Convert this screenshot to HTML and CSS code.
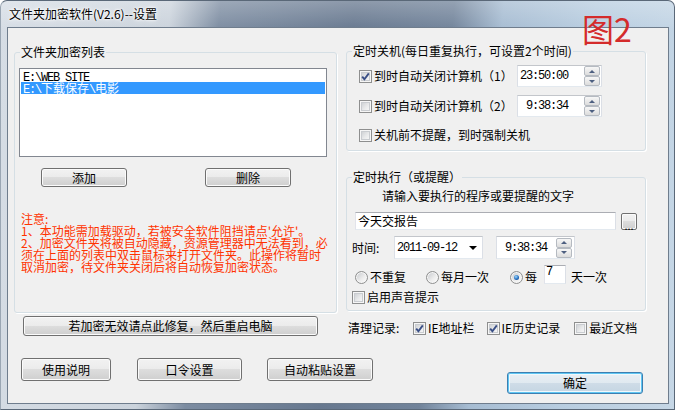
FILE: index.html
```html
<!DOCTYPE html>
<html>
<head>
  <meta charset="utf-8">
  <title>文件夹加密软件(V2.6)--设置</title>
  <link rel="stylesheet" href="styles.css">
</head>
<body>
<div class="window">
  <div class="titlebar">文件夹加密软件(V2.6)--设置</div>
  <div class="tag">图2</div>
  <div class="client">
    <div class="main">
      <fieldset class="group files">
        <legend>文件夹加密列表</legend>
        <div class="listbox">
          <div class="item"><span class="m">E:\WEB SITE</span></div>
          <div class="item sel"><span class="m">E:\</span>下载保存<span class="m">\</span>电影</div>
        </div>
        <div class="list-btns">
          <button class="btn add">添加</button>
          <button class="btn del">删除</button>
        </div>
        <p class="notice">注意:<br>1、本功能需加载驱动，若被安全软件阻挡请点'允许'。<br>2、加密文件夹将被自动隐藏，资源管理器中无法看到，必<br>须在上面的列表中双击鼠标来打开文件夹。此操作将暂时<br>取消加密，待文件夹关闭后将自动恢复加密状态。</p>
      </fieldset>

      <div class="right">
        <fieldset class="group shutdown">
          <legend>定时关机(每日重复执行，可设置2个时间)</legend>
          <div class="row r1">
            <span class="cb on"><svg width="9" height="9" viewBox="0 0 9 9"><path d="M1.2 4.6 L3.4 7.2 L7.8 1.4" fill="none" stroke="#3a4f86" stroke-width="1.9"/></svg></span>
            <span class="lbl">到时自动关闭计算机（1）</span>
            <div class="timebox"><span class="val m">23:50:00</span><span class="spin"><i class="up"></i><i class="down"></i></span></div>
          </div>
          <div class="row r2">
            <span class="cb"></span>
            <span class="lbl">到时自动关闭计算机（2）</span>
            <div class="timebox"><span class="val m">&nbsp;9:38:34</span><span class="spin"><i class="up"></i><i class="down"></i></span></div>
          </div>
          <div class="row r3">
            <span class="cb"></span>
            <span class="lbl">关机前不提醒，到时强制关机</span>
          </div>
        </fieldset>

        <fieldset class="group timer">
          <legend>定时执行（或提醒）</legend>
          <div class="prompt">请输入要执行的程序或要提醒的文字</div>
          <div class="textrow">
            <div class="textbox">今天交报告</div>
            <button class="btn dots">...</button>
          </div>
          <div class="daterow">
            <span class="dlabel">时间:</span>
            <div class="datebox"><span class="m">2011-09-12</span><span class="drop"></span></div>
            <div class="timebox small"><span class="val m">&nbsp;9:38:34</span><span class="spin"><i class="up"></i><i class="down"></i></span></div>
          </div>
          <div class="radiorow">
            <span class="rb"></span><span class="lbl">不重复</span>
            <span class="rb r-month"></span><span class="lbl">每月一次</span>
            <span class="rb on r-every"></span><span class="lbl">每</span>
            <div class="numbox m">7</div>
            <span class="lbl days">天一次</span>
          </div>
          <div class="row sound">
            <span class="cb"></span>
            <span class="lbl">启用声音提示</span>
          </div>
        </fieldset>
      </div>
    </div>

    <div class="mid">
      <button class="btn repair">若加密无效请点此修复，然后重启电脑</button>
      <div class="clean">
        <span class="clabel">清理记录:</span>
        <span class="cb on"><svg width="9" height="9" viewBox="0 0 9 9"><path d="M1.2 4.6 L3.4 7.2 L7.8 1.4" fill="none" stroke="#3a4f86" stroke-width="1.9"/></svg></span>
        <span class="lbl">IE地址栏</span>
        <span class="cb on c2"><svg width="9" height="9" viewBox="0 0 9 9"><path d="M1.2 4.6 L3.4 7.2 L7.8 1.4" fill="none" stroke="#3a4f86" stroke-width="1.9"/></svg></span>
        <span class="lbl">IE历史记录</span>
        <span class="cb c3"></span>
        <span class="lbl">最近文档</span>
      </div>
    </div>

    <div class="bottom">
      <button class="btn help">使用说明</button>
      <button class="btn pass">口令设置</button>
      <button class="btn paste">自动粘贴设置</button>
      <button class="btn ok">确定</button>
    </div>
  </div>
</div>
</body>
</html>
```

FILE: styles.css
```css
* {
  box-sizing: border-box;
}

body {
  margin: 0;
  background: #fff;
  font-family: "Noto Sans CJK SC", "Liberation Sans", sans-serif;
  font-size: 12px;
  color: #000;
}

.m {
  font-family: "Liberation Mono", "Noto Sans CJK SC", monospace;
  letter-spacing: -1.2px;
}

/* window frame */
.window {
  position: relative;
  width: 675px;
  height: 410px;
  border: 1px solid #5a6878;
  border-left-color: #9aa6b3;
  border-radius: 7px 7px 0 0;
  padding: 0 5px 5px 6px;
  background:
    linear-gradient(180deg, rgba(255,255,255,0.25), rgba(255,255,255,0) 30px),
    linear-gradient(95deg, #d6dde5 0%, #cbd3dc 24%, #7c8ca1 31%, #67788f 50%, #71839a 64%, #a6bcd2 71%, #b8cde0 84%, #c6d7e6 100%);
}

.titlebar {
  height: 26px;
  line-height: 26px;
  padding-left: 2px;
  font-size: 12px;
  text-shadow: 0 0 6px #fff, 0 0 3px #fff, 0 0 2px #fff;
}

.tag {
  position: absolute;
  left: 581px;
  top: 9px;
  font-size: 32px;
  line-height: 36px;
  color: #d42b2b;
  z-index: 2;
}

.client {
  width: 662px;
  height: 377px;
  border: 1px solid #6f7d8d;
  background: #f0f0f0;
  display: flex;
  flex-direction: column;
}

/* group boxes */
.group {
  margin: 0;
  padding: 0;
  border: 1px solid #d5dfe5;
  border-radius: 3px;
  box-shadow: 1px 1px 0 #fff;
  min-width: 0;
}

.group legend {
  margin-left: 5px;
  padding: 0 1px;
  line-height: 16px;
}

.main {
  display: flex;
  align-items: flex-start;
  margin: 16px 0 0 6px;
}

.files {
  width: 323px;
  height: 269px;
}

.listbox {
  width: 308px;
  height: 89px;
  margin: 8px 0 0 4px;
  padding: 1px;
  border: 1px solid #828790;
  background: #fff;
}

.item {
  height: 12px;
  line-height: 12px;
  padding-left: 2px;
  white-space: nowrap;
}

.item.sel {
  background: #3399ff;
  color: #fff;
}

.list-btns {
  display: flex;
  margin: 11px 0 0 26px;
  gap: 78px;
}

.btn {
  font: inherit;
  color: #000;
  padding: 0;
  border: 1px solid #707070;
  border-radius: 3px;
  background: linear-gradient(#f2f2f2 0%, #ebebeb 50%, #dddddd 50%, #cfcfcf 100%);
  box-shadow: inset 0 0 0 1px #fbfbfb;
  line-height: 16px;
}

.add, .del {
  width: 86px;
  height: 19px;
}

.notice {
  margin: 26px 0 0 6px;
  line-height: 12px;
  color: #ff3300;
  white-space: nowrap;
}

/* right column */
.right {
  width: 300px;
  margin-left: 9px;
  margin-top: -1px;
}

.shutdown {
  height: 108px;
}

.row {
  display: flex;
  align-items: center;
  height: 22px;
  padding: 0 43px 0 12px;
}

.r1 {
  margin-top: 6px;
}

.r2 {
  margin-top: 8px;
}

.r3 {
  margin-top: 10px;
  height: 16px;
}

.lbl {
  margin-left: 2px;
  line-height: 16px;
  white-space: nowrap;
}

.cb {
  flex: none;
  width: 13px;
  height: 13px;
  border: 1px solid #8e8f8f;
  background: linear-gradient(135deg, #c4c7cb 0%, #e9eaeb 55%, #fdfdfd 100%);
  box-shadow: inset 0 0 0 1px #f6f6f6, inset 0 0 0 2px #c9ccd0;
  display: flex;
  align-items: center;
  justify-content: center;
}

.cb svg {
  display: block;
}

.timebox {
  display: flex;
  align-items: center;
  width: 85px;
  height: 22px;
  margin-left: auto;
  border: 1px solid;
  border-color: #c3c6cb #dbdfe6 #e3e9ef #dbdfe6;
  background: #fff;
}

.timebox .val {
  flex: 1;
  padding-left: 2px;
  line-height: 16px;
}

.spin {
  display: flex;
  flex-direction: column;
  width: 16px;
  margin-right: 1px;
}

.spin i {
  display: flex;
  align-items: center;
  justify-content: center;
  height: 10px;
  border: 1px solid #b5bac1;
  border-radius: 2px;
  background: linear-gradient(#f7f7f7, #dcdcdc);
}

.spin i::after {
  content: "";
  border-left: 3px solid transparent;
  border-right: 3px solid transparent;
}

.spin .up::after {
  border-bottom: 3px solid #4d5f80;
}

.spin .down::after {
  border-top: 3px solid #4d5f80;
}

.timer {
  height: 142px;
  margin-top: 18px;
}

.prompt {
  margin: 3px 0 0 35px;
  line-height: 16px;
}

.textrow {
  display: flex;
  align-items: flex-start;
  margin: 8px 0 0 8px;
}

.textbox {
  width: 261px;
  height: 18px;
  line-height: 16px;
  padding-left: 2px;
  border: 1px solid;
  border-color: #abadb3 #dbdfe6 #e3e9ef #e2e3ea;
  background: #fff;
}

.dots {
  width: 16px;
  height: 17px;
  margin: 1px 0 0 5px;
  border-radius: 2px;
  line-height: 22px;
  font-size: 11px;
}

.daterow {
  display: flex;
  align-items: center;
  height: 23px;
  margin: 6px 0 0 5px;
}

.dlabel {
  width: 42px;
  line-height: 16px;
}

.datebox {
  display: flex;
  align-items: center;
  justify-content: space-between;
  width: 89px;
  height: 23px;
  padding: 0 5px 0 2px;
  border: 1px solid;
  border-color: #c3c6cb #dbdfe6 #e3e9ef #dbdfe6;
  background: #fff;
}

.drop {
  border-left: 4px solid transparent;
  border-right: 4px solid transparent;
  border-top: 4px solid #000;
}

.timebox.small {
  width: 79px;
  height: 23px;
  margin-left: 13px;
}

.timebox.small .spin {
  margin-right: 2px;
}

.radiorow {
  display: flex;
  align-items: center;
  height: 16px;
  margin: 10px 0 0 8px;
}

.rb {
  flex: none;
  width: 13px;
  height: 13px;
  border-radius: 50%;
  border: 1px solid #8e8f8f;
  background: linear-gradient(135deg, #c4c7cb, #eeeeee 60%, #fdfdfd);
  box-shadow: inset 0 0 0 1px #f6f6f6;
  display: flex;
  align-items: center;
  justify-content: center;
}

.rb.on::after {
  content: "";
  width: 5px;
  height: 5px;
  border-radius: 50%;
  background: radial-gradient(circle at 40% 35%, #9bd8ff, #1e66b8 60%, #123f7d);
}

.r-month {
  margin-left: 20px;
}

.r-every {
  margin-left: 21px;
}

.numbox {
  align-self: flex-start;
  width: 22px;
  height: 19px;
  margin: -4px 0 0 7px;
  padding: 0 0 0 1px;
  line-height: 13px;
  border: 1px solid;
  border-color: #abadb3 #dbdfe6 #e3e9ef #e2e3ea;
  background: #fff;
}

.days {
  margin-left: 5px;
}

.sound {
  height: 16px;
  margin-top: 4px;
  padding-left: 5px;
}

/* lower rows */
.mid {
  display: flex;
  align-items: flex-start;
  margin-top: 3px;
}

.repair {
  width: 295px;
  height: 20px;
  margin-left: 15px;
}

.clean {
  display: flex;
  align-items: center;
  height: 16px;
  margin: 4px 0 0 30px;
}

.clabel {
  width: 65px;
  line-height: 16px;
}

.c2 {
  margin-left: 12px;
}

.c3 {
  margin-left: 14px;
}

.bottom {
  display: flex;
  align-items: flex-start;
  margin-top: 22px;
}

.help {
  width: 90px;
  height: 23px;
  margin-left: 13px;
}

.pass {
  width: 105px;
  height: 23px;
  margin-left: 26px;
}

.paste {
  width: 106px;
  height: 23px;
  margin-left: 25px;
}

.ok {
  width: 136px;
  height: 22px;
  margin: 14px 0 0 134px;
  border-color: #3c7fb1;
  background: linear-gradient(#e9eff4 0%, #e0e9f0 50%, #cfdce7 50%, #c4d5e2 100%);
  box-shadow: inset 0 0 0 1px #5fc6f3, inset 0 0 0 2px #f0f8fc;
}
```
